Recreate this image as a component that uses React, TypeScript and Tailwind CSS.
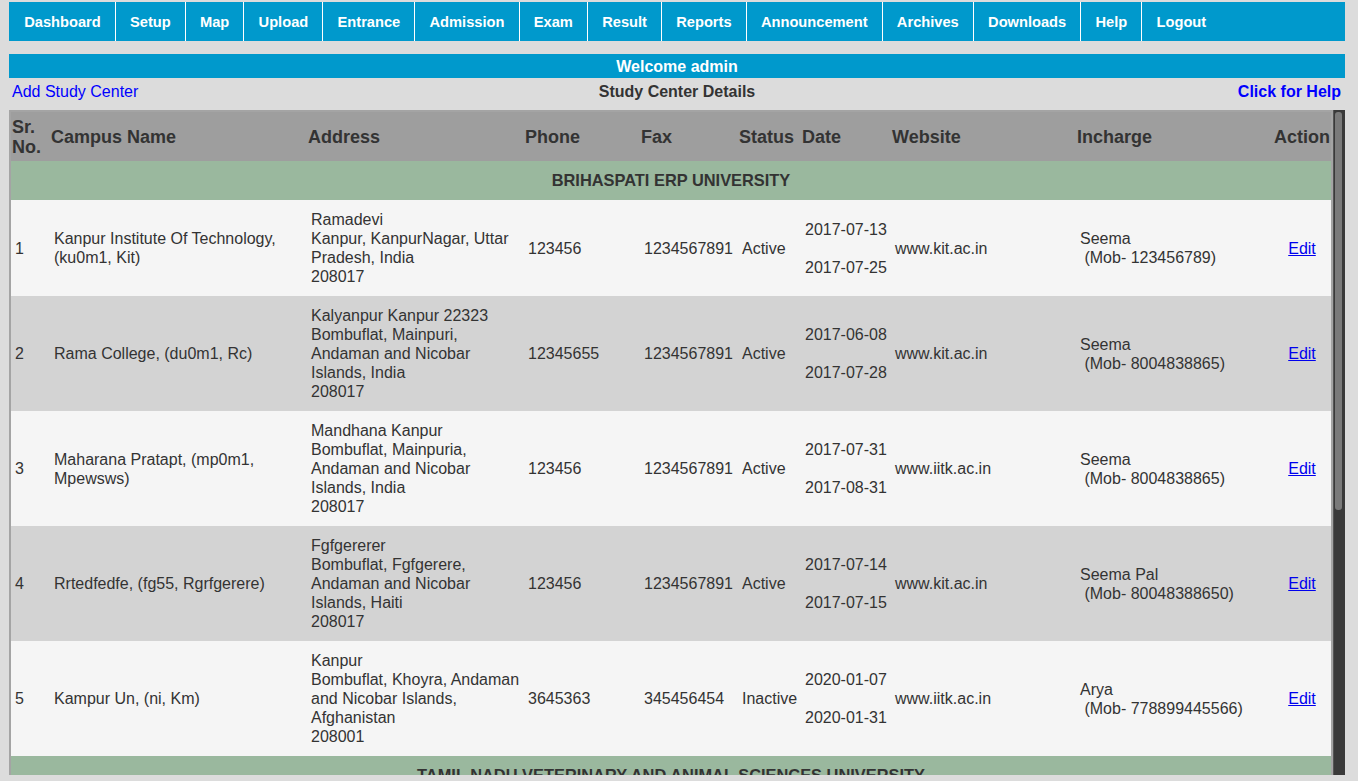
import React from 'react';

interface Center {
  sr: number;
  campus: string[];
  address: string[];
  phone: string;
  fax: string;
  status: string;
  from: string;
  to: string;
  website: string;
  incharge: string;
  mobile: string;
}

interface University {
  name: string;
  centers: Center[];
}

const menu = ['Dashboard', 'Setup', 'Map', 'Upload', 'Entrance', 'Admission', 'Exam', 'Result', 'Reports', 'Announcement', 'Archives', 'Downloads', 'Help', 'Logout'];

const universities: University[] = [
  {
    name: 'BRIHASPATI ERP UNIVERSITY',
    centers: [
      { sr: 1, campus: ['Kanpur Institute Of Technology,', '(ku0m1, Kit)'], address: ['Ramadevi', 'Kanpur, KanpurNagar, Uttar', 'Pradesh, India', '208017'], phone: '123456', fax: '1234567891', status: 'Active', from: '2017-07-13', to: '2017-07-25', website: 'www.kit.ac.in', incharge: 'Seema', mobile: '123456789' },
      { sr: 2, campus: ['Rama College, (du0m1, Rc)'], address: ['Kalyanpur Kanpur 22323', 'Bombuflat, Mainpuri,', 'Andaman and Nicobar', 'Islands, India', '208017'], phone: '12345655', fax: '1234567891', status: 'Active', from: '2017-06-08', to: '2017-07-28', website: 'www.kit.ac.in', incharge: 'Seema', mobile: '8004838865' },
      { sr: 3, campus: ['Maharana Pratapt, (mp0m1,', 'Mpewsws)'], address: ['Mandhana Kanpur', 'Bombuflat, Mainpuria,', 'Andaman and Nicobar', 'Islands, India', '208017'], phone: '123456', fax: '1234567891', status: 'Active', from: '2017-07-31', to: '2017-08-31', website: 'www.iitk.ac.in', incharge: 'Seema', mobile: '8004838865' },
      { sr: 4, campus: ['Rrtedfedfe, (fg55, Rgrfgerere)'], address: ['Fgfgererer', 'Bombuflat, Fgfgerere,', 'Andaman and Nicobar', 'Islands, Haiti', '208017'], phone: '123456', fax: '1234567891', status: 'Active', from: '2017-07-14', to: '2017-07-15', website: 'www.kit.ac.in', incharge: 'Seema Pal', mobile: '80048388650' },
      { sr: 5, campus: ['Kampur Un, (ni, Km)'], address: ['Kanpur', 'Bombuflat, Khoyra, Andaman', 'and Nicobar Islands,', 'Afghanistan', '208001'], phone: '3645363', fax: '345456454', status: 'Inactive', from: '2020-01-07', to: '2020-01-31', website: 'www.iitk.ac.in', incharge: 'Arya', mobile: '778899445566' }
    ]
  },
  {
    name: 'TAMIL NADU VETERINARY AND ANIMAL SCIENCES UNIVERSITY',
    centers: [
      { sr: 6, campus: ['Madras Veterinary College,', '(tn0m1, Mvc)'], address: ['Vepery', 'Chennai, Tamil Nadu,', 'India', '600007'], phone: '4425304000', fax: '4425361278', status: 'Active', from: '2018-03-01', to: '2018-03-30', website: 'www.tanuvas.ac.in', incharge: 'Ravi', mobile: '9876543210' },
      { sr: 7, campus: ['Veterinary College, (tn0m2, Vcri)'], address: ['Namakkal Road', 'Namakkal, Namakkal,', 'Tamil Nadu and Nicobar', 'Islands, India', '637002'], phone: '4286266491', fax: '4286266484', status: 'Active', from: '2018-04-02', to: '2018-04-28', website: 'www.tanuvas.ac.in', incharge: 'Kumar', mobile: '9944556677' }
    ]
  }
];

const headers = ['Campus Name', 'Address', 'Phone', 'Fax', 'Status', 'Date', 'Website', 'Incharge', 'Action'];

const Lines: React.FC<{ lines: string[] }> = ({ lines }) => (
  <>
    {lines.map((l, i) => (
      <div key={i} className="whitespace-nowrap">{l}</div>
    ))}
  </>
);

const App: React.FC = () => {
  let rowNo = 0;
  return (
    <div className="h-screen overflow-hidden bg-[#dcdcdc] pl-[9px] pr-[13px] pt-[2px] text-[16px] text-[#333]" style={{ fontFamily: '"Liberation Sans", Arial, sans-serif' }}>
      {/* Menu */}
      <nav className="flex h-[39px] bg-[#0099cc] pl-px">
        {menu.map((m, i) => (
          <a
            key={m}
            className={`flex items-center px-[14.15px] pt-px text-[14.667px] font-bold text-white ${i < menu.length - 1 ? 'border-r border-white' : ''}`}
          >
            {m}
          </a>
        ))}
      </nav>

      {/* Welcome */}
      <div className="mt-[13px] flex h-[24px] items-center justify-center bg-[#0099cc] pt-px font-bold text-white">Welcome admin</div>

      {/* Title row */}
      <div className="grid h-[26px] grid-cols-[1fr_auto_1fr] items-center px-[3px] pt-px">
        <a className="text-[#0000ff]">Add Study Center</a>
        <span className="font-bold text-[#333]">Study Center Details</span>
        <a className="justify-self-end pr-px font-bold text-[#0000ff]">Click for Help</a>
      </div>

      {/* Table with scrollbar */}
      <div className="mt-[6px] flex h-[665px] bg-[#a4a4a4]">
        <div className="overflow-hidden pl-[2px] pr-[2px] pt-[2px]">
          <table className="w-[1320px] table-fixed border-collapse">
            <colgroup>
              <col className="w-[39px]" />
              <col className="w-[257px]" />
              <col className="w-[217px]" />
              <col className="w-[116px]" />
              <col className="w-[98px]" />
              <col className="w-[63px]" />
              <col className="w-[90px]" />
              <col className="w-[185px]" />
              <col className="w-[197px]" />
              <col className="w-[58px]" />
            </colgroup>
            <thead>
              <tr className="h-[49px] bg-[#9e9e9e] text-left text-[18px] font-bold leading-[20px] text-[#333]">
                <th className="px-px">Sr.<br />No.</th>
                {headers.map(h => (
                  <th key={h} className="whitespace-nowrap px-px">{h}</th>
                ))}
              </tr>
            </thead>
            <tbody className="leading-[19px]">
              {universities.map(u => (
                <React.Fragment key={u.name}>
                  <tr className="bg-[#9ab89e]">
                    <td colSpan={10} className="py-[10px] text-center text-[16.4px] font-bold text-[#333]">{u.name}</td>
                  </tr>
                  {u.centers.map(c => {
                    rowNo += 1;
                    const bg = rowNo % 2 === 1 ? 'bg-[#f5f5f5]' : 'bg-[#d3d3d3]';
                    return (
                      <tr key={c.sr} className={`${bg} align-middle [&>td]:px-[4px] [&>td]:py-[10px]`}>
                        <td>{c.sr}</td>
                        <td><Lines lines={c.campus} /></td>
                        <td><Lines lines={c.address} /></td>
                        <td>{c.phone}</td>
                        <td>{c.fax}</td>
                        <td>{c.status}</td>
                        <td>
                          <div>{c.from}</div>
                          <div>&nbsp;</div>
                          <div>{c.to}</div>
                        </td>
                        <td className="whitespace-nowrap">{c.website}</td>
                        <td className="whitespace-nowrap">
                          <div>{c.incharge}</div>
                          <div>&nbsp;(Mob- {c.mobile})</div>
                        </td>
                        <td className="text-center">
                          <a className="cursor-pointer text-[#0000ee] underline">Edit</a>
                        </td>
                      </tr>
                    );
                  })}
                </React.Fragment>
              ))}
            </tbody>
          </table>
        </div>
        {/* scrollbar */}
        <div className="w-[12px] shrink-0 border-l border-[#555] bg-[#3a3a3a] pl-[1px] pr-[3px] pt-[2px]">
          <div className="h-[398px] rounded-[3px] bg-[#7a7a7a]" />
        </div>
      </div>
    </div>
  );
};

export default App;
